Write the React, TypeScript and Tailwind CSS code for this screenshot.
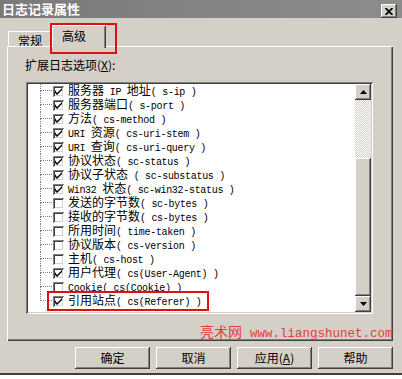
const items = [
  { label: '服务器 IP 地址( s-ip )', checked: true },
  { label: '服务器端口( s-port )', checked: true },
  { label: '方法( cs-method )', checked: true },
  { label: 'URI 资源( cs-uri-stem )', checked: true },
  { label: 'URI 查询( cs-uri-query )', checked: true },
  { label: '协议状态( sc-status )', checked: true },
  { label: '协议子状态 ( sc-substatus )', checked: true },
  { label: 'Win32 状态( sc-win32-status )', checked: true },
  { label: '发送的字节数( sc-bytes )', checked: false },
  { label: '接收的字节数( cs-bytes )', checked: false },
  { label: '所用时间( time-taken )', checked: false },
  { label: '协议版本( cs-version )', checked: false },
  { label: '主机( cs-host )', checked: false },
  { label: '用户代理( cs(User-Agent) )', checked: true },
  { label: 'Cookie( cs(Cookie) )', checked: false },
  { label: '引用站点( cs(Referer) )', checked: true },
];

const raised =
  'shadow-[inset_-1px_-1px_#404040,inset_1px_1px_#ffffff,inset_-2px_-2px_#808080,inset_2px_2px_#d4d0c8]';

function Mixed({ text }: { text: string }) {
  const parts = text.split(/([\x00-\x7f]+)/).filter(Boolean);
  return (
    <>
      {parts.map((p, i) =>
        /^[\x00-\x7f]+$/.test(p) ? (
          <span key={i} className="font-['Liberation_Mono',monospace] text-[10px] tracking-[-0.3px] whitespace-pre">
            {p}
          </span>
        ) : (
          <span key={i}>{p}</span>
        )
      )}
    </>
  );
}

function CheckBox({ checked }: { checked: boolean }) {
  return (
    <div className="w-[11px] h-[11px] shrink-0 bg-white shadow-[inset_1px_1px_#808080,inset_-1px_-1px_#ffffff,inset_2px_2px_#404040,inset_-2px_-2px_#d4d0c8] flex items-center justify-center">
      {checked && (
        <svg width="7" height="7" viewBox="0 0 7 7">
          <path d="M0 2 L0 5 L2 7 L7 2 L7 0 L2 5 Z" fill="#000" />
        </svg>
      )}
    </div>
  );
}

function Row({ label, checked, last }: { label: string; checked: boolean; last: boolean }) {
  return (
    <div className="h-[14px] flex items-center">
      <div className="w-[12px] shrink-0" />
      <div className="w-[12px] h-[14px] shrink-0 flex flex-col">
        <div className="h-[7px] border-l border-b border-dotted border-[#808080]" />
        <div className={`h-[7px] ${last ? '' : 'border-l border-dotted border-[#808080]'}`} />
      </div>
      <div className="ml-[1px]">
        <CheckBox checked={checked} />
      </div>
      <div className="ml-[4px] text-[12px] leading-[14px] text-black whitespace-pre">
        <Mixed text={label} />
      </div>
    </div>
  );
}

function Arrow({ up }: { up: boolean }) {
  return (
    <div className={`w-[16px] h-[16px] shrink-0 bg-[#d4d0c8] ${raised} flex items-center justify-center`}>
      <svg width="7" height="4" viewBox="0 0 7 4">
        <path d={up ? 'M3.5 0 L7 4 L0 4 Z' : 'M0 0 L7 0 L3.5 4 Z'} fill="#000" />
      </svg>
    </div>
  );
}

function Button({ children }: { children: React.ReactNode }) {
  return (
    <div className={`w-[75px] h-[22px] bg-[#d4d0c8] ${raised} flex items-center justify-center text-[12px] text-black`}>
      {children}
    </div>
  );
}

export default function App() {
  return (
    <div className="w-[402px] h-[379px] bg-[#d4d0c8] flex flex-col overflow-hidden font-['Noto_Sans_CJK_SC',sans-serif]">
      {/* title bar */}
      <div className="h-[18px] shrink-0 flex justify-between pl-[2px] pr-[5px] bg-gradient-to-r from-[#7a7a7a] to-[#8c8c8c]">
        <span className="text-white font-bold text-[13px] leading-[18px]">日志记录属性</span>
        <div className={`mt-[4px] w-[16px] h-[14px] bg-[#d4d0c8] ${raised} flex items-center justify-center`}>
          <svg width="8" height="7" viewBox="0 0 8 7">
            <path d="M0.5 0 L7.5 7 M7.5 0 L0.5 7" stroke="#000" strokeWidth="1.8" />
          </svg>
        </div>
      </div>

      <div className="pt-[7px] pl-[7px] pr-[9px] flex flex-col">
        {/* tabs */}
        <div className="h-[23px] flex items-end pl-[1px] -mb-[2px]">
          <div className="w-[44px] h-[17px] border-l border-t border-white border-r border-r-[#404040] rounded-t-[2px] shadow-[inset_-1px_0_#808080] text-[12px] leading-[16px] text-center pt-[1px] text-black">
            常规
          </div>
          <div className="relative z-10 w-[54px] h-[23px] bg-[#d4d0c8] border-l border-t border-white border-r border-r-[#404040] rounded-t-[2px] shadow-[inset_-1px_0_#808080] text-[12px] leading-[16px] pl-[9px] pt-[2px] text-black">
            高级
            <div className="absolute -left-[3px] -top-[3px] w-[67px] h-[31px] border-2 border-[#e01010]" />
          </div>
        </div>

        {/* panel */}
        <div className="relative h-[295px] bg-[#d4d0c8] shadow-[inset_1px_1px_#ffffff,inset_-1px_-1px_#404040,inset_-2px_-2px_#808080] pt-[12px]">
          <div className="pl-[18px] text-[12px] leading-[14px] text-black">
            扩展日志选项(<span className="underline">X</span>):
          </div>
          <div className="ml-[19px] mt-[10px] w-[347px] h-[232px] p-[2px] bg-white shadow-[inset_1px_1px_#808080,inset_-1px_-1px_#ffffff,inset_2px_2px_#404040,inset_-2px_-2px_#d4d0c8] flex">
            <div className="relative flex-1 flex flex-col">
              {items.map((it, i) => (
                <Row key={it.label} label={it.label} checked={it.checked} last={i === items.length - 1} />
              ))}
              <div className="absolute left-[19px] top-[207px] w-[162px] h-[20px] border-2 border-[#e01010]" />
            </div>
            <div className="w-[16px] flex flex-col">
              <Arrow up />
              <div className="h-[58px] bg-[repeating-conic-gradient(#ffffff_0%_25%,#d4d0c8_0%_50%)] bg-[length:2px_2px]" />
              <div className={`h-[138px] bg-[#d4d0c8] ${raised}`} />
              <Arrow up={false} />
            </div>
          </div>
          <div className="absolute left-[193px] top-[277px] flex items-baseline text-[#e63b3b] leading-[16px]">
            <span className="text-[14px]">亮术网</span>
            <span className="ml-[8px] font-['Liberation_Mono',monospace] text-[12.5px]">www.liangshunet.com</span>
          </div>
        </div>

        {/* buttons */}
        <div className="mt-[6px] flex justify-end gap-[6px]">
          <Button>确定</Button>
          <Button>取消</Button>
          <Button>
            应用(<span className="underline">A</span>)
          </Button>
          <Button>帮助</Button>
        </div>
      </div>
      <div className="mt-[4px] h-[2px] bg-[#404040]" />
      <div className="flex-1 bg-white" />
    </div>
  );
}
